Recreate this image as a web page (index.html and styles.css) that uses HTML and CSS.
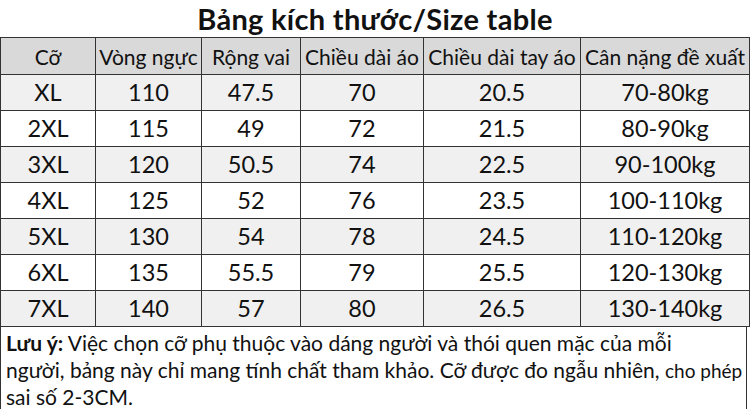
FILE: index.html
```html
<!DOCTYPE html>
<html lang="vi">
<head>
<meta charset="utf-8">
<link rel="stylesheet" href="styles.css">
</head>
<body>
<div class="sheet">
  <h1 class="title">Bảng kích thước/Size table</h1>
  <table class="size-table">
    <colgroup>
      <col class="c1"><col class="c2"><col class="c3"><col class="c4"><col class="c5"><col class="c6">
    </colgroup>
    <thead>
      <tr><th>Cỡ</th><th>Vòng ngực</th><th>Rộng vai</th><th>Chiều dài áo</th><th>Chiều dài tay áo</th><th>Cân nặng đề xuất</th></tr>
    </thead>
    <tbody>
      <tr class="alt"><td>XL</td><td>110</td><td>47.5</td><td>70</td><td>20.5</td><td>70-80kg</td></tr>
      <tr><td>2XL</td><td>115</td><td>49</td><td>72</td><td>21.5</td><td>80-90kg</td></tr>
      <tr class="alt"><td>3XL</td><td>120</td><td>50.5</td><td>74</td><td>22.5</td><td>90-100kg</td></tr>
      <tr><td>4XL</td><td>125</td><td>52</td><td>76</td><td>23.5</td><td>100-110kg</td></tr>
      <tr class="alt"><td>5XL</td><td>130</td><td>54</td><td>78</td><td>24.5</td><td>110-120kg</td></tr>
      <tr><td>6XL</td><td>135</td><td>55.5</td><td>79</td><td>25.5</td><td>120-130kg</td></tr>
      <tr class="alt"><td>7XL</td><td>140</td><td>57</td><td>80</td><td>26.5</td><td>130-140kg</td></tr>
    </tbody>
  </table>
  <div class="note">
    <p class="line"><b>Lưu ý:</b> Việc chọn cỡ phụ thuộc vào dáng người và thói quen mặc của mỗi</p>
    <p class="line">người, bảng này chỉ mang tính chất tham khảo. Cỡ được đo ngẫu nhiên, <span class="small">cho phép</span></p>
    <p class="line">sai số 2-3CM.</p>
  </div>
</div>
</body>
</html>
```
FILE: styles.css
```css
html, body {
  margin: 0;
  padding: 0;
  background: #ffffff;
}
.sheet {
  width: 750px;
  height: 409px;
  overflow: hidden;
  font-family: "Lato", "Open Sans", sans-serif;
  color: #111;
}
.title {
  margin: 0;
  height: 37px;
  line-height: 37px;
  text-align: center;
  font-size: 29px;
  font-weight: 700;
  letter-spacing: 0.3px;
}
.size-table {
  width: 749px;
  border-collapse: collapse;
  table-layout: fixed;
}
.c1 { width: 95px; }
.c2 { width: 106px; }
.c3 { width: 99px; }
.c4 { width: 123px; }
.c5 { width: 157px; }
.c6 { width: 169px; }
.size-table th,
.size-table td {
  border: 1px solid #333;
  text-align: center;
  padding: 0;
  white-space: nowrap;
  line-height: 1;
}
.size-table th {
  height: 36px;
  background: #d9d9d9;
  font-weight: 400;
  font-size: 21px;
}
.size-table td {
  height: 35px;
  font-size: 23.5px;
  background: #ffffff;
}
.size-table tr.alt td {
  background: #f0f0f0;
}
.note {
  border-left: 1px solid #333;
  border-right: 1px solid #333;
  width: 747px;
  height: 90px;
  padding: 2px 4px 0 5px;
  box-sizing: border-box;
}
.note .line {
  margin: 0;
  font-size: 21px;
  height: 27px;
  line-height: 27px;
  white-space: nowrap;
}
.note .small {
  font-size: 19px;
}
```
